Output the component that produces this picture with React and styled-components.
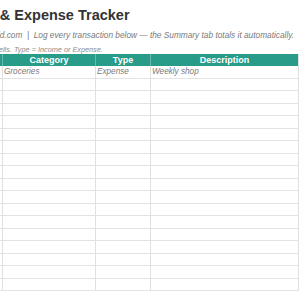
import styled, { createGlobalStyle } from 'styled-components';

const GlobalStyle = createGlobalStyle`
  html, body {
    margin: 0;
    padding: 0;
    background: #ffffff;
    overflow: hidden;
  }
  body {
    font-family: "Liberation Sans", Arial, sans-serif;
  }
`;

const columns = ['Date', 'Category', 'Type', 'Description'];

const entries = [{ date: '01/03/2025', category: 'Groceries', type: 'Expense', description: 'Weekly shop' }];

const EMPTY_ROWS = 17;

const App = () => {
  const blanks = Array.from({ length: EMPTY_ROWS }, (_, i) => i);
  return (
    <>
      <GlobalStyle />
      <Viewport>
        <Sheet>
          <Title>Income &amp; Expense Tracker</Title>
          <Subtitle>Via budgetworld.com&nbsp;&nbsp;|&nbsp;&nbsp;Log every transaction below — the Summary tab totals it automatically.</Subtitle>
          <Hint>Fill in the white cells. Type = Income or Expense.</Hint>
          <Table>
            <HeaderRow>
              {columns.map((c) => (
                <HeadCell key={c}>{c}</HeadCell>
              ))}
            </HeaderRow>
            {entries.map((e) => (
              <Row key={e.description}>
                <Cell />
                <Cell>{e.category}</Cell>
                <Cell>{e.type}</Cell>
                <Cell>{e.description}</Cell>
              </Row>
            ))}
            {blanks.map((i) => (
              <Row key={i}>
                <Cell />
                <Cell />
                <Cell />
                <Cell />
              </Row>
            ))}
          </Table>
        </Sheet>
      </Viewport>
    </>
  );
};

const Viewport = styled.div`
  width: 300px;
  height: 300px;
  display: flex;
  justify-content: flex-end;
  overflow: hidden;
`;

const Sheet = styled.div`
  flex: 0 0 371px;
  box-sizing: border-box;
  padding: 7px 1px 8px 16px;
`;

const Title = styled.h1`
  margin: 0;
  font-size: 14.5px;
  line-height: 17px;
  font-weight: 700;
  color: #333333;
  white-space: nowrap;
`;

const Subtitle = styled.p`
  margin: 6px 0 0;
  font-size: 8.3px;
  line-height: 11px;
  font-style: italic;
  color: #7a7a7a;
  white-space: nowrap;
`;

const Hint = styled.p`
  margin: 3.5px 0 0;
  font-size: 7.3px;
  line-height: 9px;
  font-style: italic;
  color: #8c8c8c;
  white-space: nowrap;
`;

const Table = styled.div`
  margin-top: 0.5px;
  display: flex;
  flex-direction: column;
`;

const rowGrid = `
  display: grid;
  grid-template-columns: 57px 93px 55px 149px;
  box-sizing: border-box;
`;

const HeaderRow = styled.div`
  ${rowGrid}
  height: 12px;
  background: #289c89;
`;

const HeadCell = styled.div`
  box-sizing: border-box;
  border-left: 1px solid rgba(255, 255, 255, 0.3);
  font-size: 9px;
  line-height: 12px;
  font-weight: 700;
  color: #ffffff;
  text-align: center;
  &:last-child {
    border-right: 1px solid #e2e2e2;
  }
`;

const Row = styled.div`
  ${rowGrid}
  height: 12.5px;
  border-bottom: 1px solid #e3e3e3;
`;

const Cell = styled.div`
  box-sizing: border-box;
  border-left: 1px solid #e0e0e0;
  padding: 0 1px;
  font-size: 8.2px;
  line-height: 12.5px;
  font-style: italic;
  color: #7a7a7a;
  white-space: nowrap;
  overflow: hidden;
  &:last-child {
    border-right: 1px solid #e0e0e0;
  }
`;

export default App;
